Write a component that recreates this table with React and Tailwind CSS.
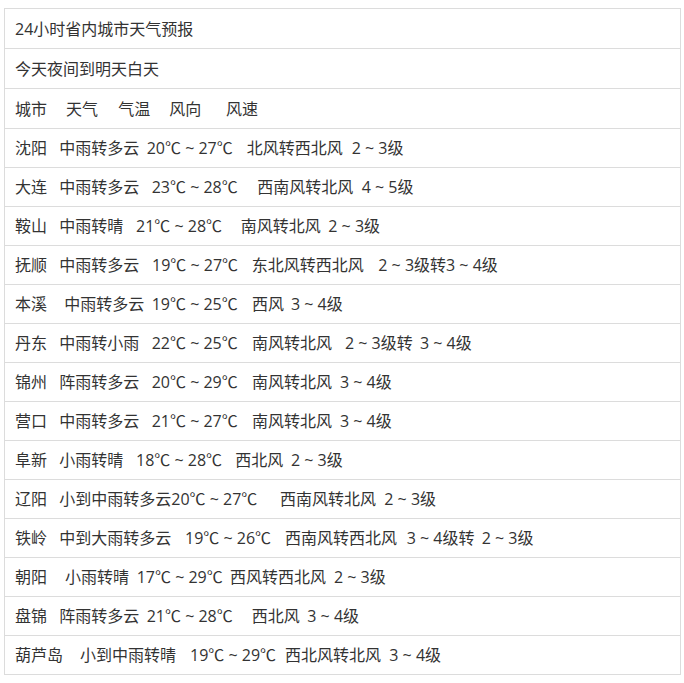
import React from "react";

const header = [
  ["城市", 15],
  ["天气", 66],
  ["气温", 118.3],
  ["风向", 169.3],
  ["风速", 226],
];

const rows = [
  [["沈阳", 15], ["中雨转多云", 59.3], ["20℃ ~ 27℃", 146.7], ["北风转西北风", 246.7], ["2 ~ 3级", 351.7]],
  [["大连", 15], ["中雨转多云", 59.3], ["23℃ ~ 28℃", 151.7], ["西南风转北风", 257.3], ["4 ~ 5级", 361.7]],
  [["鞍山", 15], ["中雨转晴", 59.3], ["21℃ ~ 28℃", 136], ["南风转北风", 240.7], ["2 ~ 3级", 328.3]],
  [["抚顺", 15], ["中雨转多云", 59.3], ["19℃ ~ 27℃", 152], ["东北风转西北风", 251.7], ["2 ~ 3级转3 ~ 4级", 378.3]],
  [["本溪", 15], ["中雨转多云", 64.3], ["19℃ ~ 25℃", 151.7], ["西风", 252], ["3 ~ 4级", 291]],
  [["丹东", 15], ["中雨转小雨", 59.3], ["22℃ ~ 25℃", 151.7], ["南风转北风", 252], ["2 ~ 3级转", 345], ["3 ~ 4级", 420]],
  [["锦州", 15], ["阵雨转多云", 59.3], ["20℃ ~ 29℃", 151.7], ["南风转北风", 252], ["3 ~ 4级", 340]],
  [["营口", 15], ["中雨转多云", 59.3], ["21℃ ~ 27℃", 151.7], ["南风转北风", 252], ["3 ~ 4级", 340]],
  [["阜新", 15], ["小雨转晴", 59.3], ["18℃ ~ 28℃", 136], ["西北风", 235.3], ["2 ~ 3级", 291]],
  [["辽阳", 15], ["小到中雨转多云20℃ ~ 27℃", 59.3], ["西南风转北风", 280], ["2 ~ 3级", 384.3]],
  [["铁岭", 15], ["中到大雨转多云", 59.3], ["19℃ ~ 26℃", 185], ["西南风转西北风", 285], ["3 ~ 4级转", 406.7], ["2 ~ 3级", 481.7]],
  [["朝阳", 15], ["小雨转晴", 65], ["17℃ ~ 29℃", 136.7], ["西风转西北风", 230], ["2 ~ 3级", 334]],
  [["盘锦", 15], ["阵雨转多云", 59.3], ["21℃ ~ 28℃", 146.7], ["西北风", 251.7], ["3 ~ 4级", 307.3]],
  [["葫芦岛", 15], ["小到中雨转晴", 80], ["19℃ ~ 29℃", 190], ["西北风转北风", 285], ["3 ~ 4级", 389.3]],
];

function Segments({ segs }) {
  return (
    <>
      {segs.map(([t, x], i) => {
        const next = segs[i + 1];
        const w = next ? next[1] - x : undefined;
        return (
          <span
            key={i}
            className="inline-block shrink-0 whitespace-pre"
            style={w ? { width: w } : undefined}
          >
            {t}
          </span>
        );
      })}
    </>
  );
}

export default function App() {
  return (
    <div
      className="bg-white w-[684px] h-[683px] pt-[8px] pl-[4px]"
      style={{ fontFamily: '"Open Sans", "Noto Sans CJK SC", sans-serif' }}
    >
      <div className="w-[677px] border border-[#dcdcdc] text-[16px] text-[#333333]">
        <div className="h-[40px] flex items-center pl-[10px] border-b border-[#dcdcdc] whitespace-pre">24小时省内城市天气预报</div>
        <div className="h-[40px] flex items-center pl-[10px] border-b border-[#dcdcdc] whitespace-pre">今天夜间到明天白天</div>
        <div className="h-[40px] flex items-center pl-[10px] border-b border-[#dcdcdc]">
          <Segments segs={header} />
        </div>
        {rows.map((r, i) => (
          <div
            key={i}
            className={
              i === rows.length - 1
                ? "h-[38px] flex items-center pl-[10px]"
                : "h-[39px] flex items-center pl-[10px] border-b border-[#dcdcdc]"
            }
          >
            <Segments segs={r} />
          </div>
        ))}
      </div>
    </div>
  );
}
